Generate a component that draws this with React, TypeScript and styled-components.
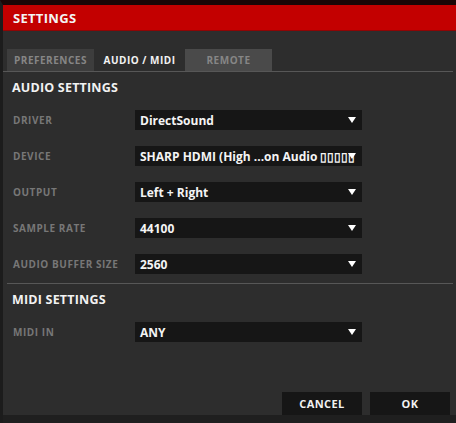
import React from "react";
import styled, { createGlobalStyle } from "styled-components";

const GlobalStyle = createGlobalStyle`
  html, body {
    margin: 0;
    padding: 0;
    background: #1b1b1b;
  }
  * {
    box-sizing: border-box;
  }
`;

const Window = styled.div`
  width: 456px;
  height: 423px;
  display: flex;
  flex-direction: column;
  border-top: 5px solid #1a0606;
  border-left: 3px solid #1c1c1c;
  background: #2d2d2d;
  font-family: "Open Sans", "Liberation Sans", sans-serif;
  overflow: hidden;
`;

const TitleBar = styled.div`
  height: 26px;
  flex: none;
  display: flex;
  align-items: center;
  padding-left: 10px;
  background: #c30000;
  border-bottom: 1px solid #8e0505;
  color: #f4f4f4;
  font-weight: 700;
  font-size: 13px;
  letter-spacing: 0.3px;
`;

const TabBar = styled.div`
  display: flex;
  gap: 2px;
  margin-top: 18px;
  padding-left: 4px;
  height: 22px;
  flex: none;
`;

const Tab = styled.div<{ $active?: boolean; $tone?: string }>`
  width: 87px;
  display: flex;
  align-items: center;
  justify-content: center;
  font-size: 10px;
  font-weight: 700;
  letter-spacing: 0.5px;
  background: ${({ $active, $tone }) => ($active ? "#2d2d2d" : $tone || "#3d3d3d")};
  color: ${({ $active }) => ($active ? "#f2f2f2" : "#868686")};
`;

const Rule = styled.div<{ $inset?: number }>`
  height: 1px;
  flex: none;
  margin-left: ${({ $inset }) => $inset || 0}px;
  margin-right: 3px;
  background: #575757;
`;

const SectionTitle = styled.div`
  height: 30px;
  flex: none;
  display: flex;
  align-items: center;
  padding-left: 9px;
  color: #f2f2f2;
  font-size: 12.5px;
  font-weight: 700;
  letter-spacing: 0.2px;
`;

const Row = styled.div`
  height: 36px;
  flex: none;
  display: flex;
  align-items: center;
  padding-left: 10px;
`;

const Label = styled.div`
  width: 122px;
  color: #777777;
  font-size: 10px;
  font-weight: 700;
  letter-spacing: 0.55px;
`;

const Select = styled.div`
  width: 227px;
  height: 20px;
  position: relative;
  display: flex;
  align-items: center;
  padding: 0 22px 0 5px;
  background: #161616;
  color: #f4f4f4;
  font-size: 12px;
  font-weight: 700;
  white-space: nowrap;
  overflow: hidden;
`;

const Arrow = styled.svg`
  position: absolute;
  right: 6px;
  top: 7px;
`;

const Footer = styled.div`
  flex: 1;
  display: flex;
  justify-content: flex-end;
  align-items: flex-end;
  gap: 8px;
  padding: 0 6px 8px 0;
  background: linear-gradient(to bottom, #2d2d2d calc(100% - 8px), #1f1f1f calc(100% - 8px));
`;

const Button = styled.div`
  width: 80px;
  height: 23px;
  display: flex;
  align-items: center;
  justify-content: center;
  background: #161616;
  color: #f2f2f2;
  font-size: 11px;
  font-weight: 700;
  letter-spacing: 0.4px;
`;

const Dropdown = ({ value }: { value: string }) => (
  <Select>
    {value}
    <Arrow width="8" height="6" viewBox="0 0 8 6">
      <path d="M0 0 H8 L4 6 Z" fill="#ffffff" />
    </Arrow>
  </Select>
);

const audioRows = [
  { label: "DRIVER", value: "DirectSound" },
  { label: "DEVICE", value: "SHARP HDMI (High ...on Audio \u25AF\u25AF\u25AF\u25AF\u25AF" },
  { label: "OUTPUT", value: "Left + Right" },
  { label: "SAMPLE RATE", value: "44100" },
  { label: "AUDIO BUFFER SIZE", value: "2560" },
];

export default function App() {
  return (
    <>
      <GlobalStyle />
      <Window>
        <TitleBar>SETTINGS</TitleBar>
        <TabBar>
          <Tab>PREFERENCES</Tab>
          <Tab $active>AUDIO / MIDI</Tab>
          <Tab $tone="#4a4a4a">REMOTE</Tab>
        </TabBar>
        <Rule />
        <SectionTitle>AUDIO SETTINGS</SectionTitle>
        {audioRows.map((r) => (
          <Row key={r.label}>
            <Label>{r.label}</Label>
            <Dropdown value={r.value} />
          </Row>
        ))}
        <Rule $inset={4} style={{ marginTop: 1 }} />
        <SectionTitle>MIDI SETTINGS</SectionTitle>
        <Row>
          <Label>MIDI IN</Label>
          <Dropdown value="ANY" />
        </Row>
        <Footer>
          <Button>CANCEL</Button>
          <Button>OK</Button>
        </Footer>
      </Window>
    </>
  );
}
